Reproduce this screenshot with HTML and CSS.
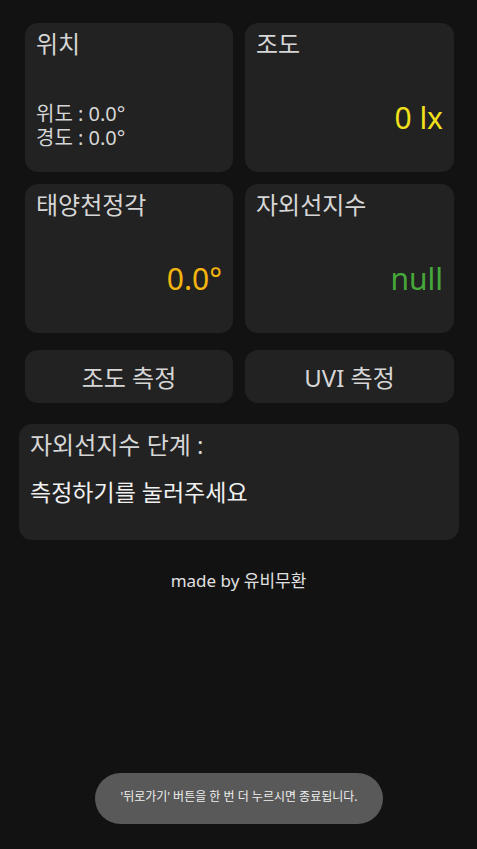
FILE: index.html
```html
<!DOCTYPE html>
<html lang="ko">
<head>
<meta charset="utf-8">
<link rel="stylesheet" href="styles.css">
</head>
<body>
<main class="screen">
  <section class="grid">
    <div class="card">
      <div class="title">위치</div>
      <p class="coords">위도 : 0.0°<br>경도 : 0.0°</p>
    </div>
    <div class="card">
      <div class="title">조도</div>
      <div class="value lux">0 lx</div>
    </div>
    <div class="card">
      <div class="title">태양천정각</div>
      <div class="value zenith">0.0°</div>
    </div>
    <div class="card">
      <div class="title">자외선지수</div>
      <div class="value uvi">null</div>
    </div>
    <button class="btn">조도 측정</button>
    <button class="btn">UVI 측정</button>
  </section>
  <section class="stage">
    <div class="stage-title">자외선지수 단계 :</div>
    <div class="stage-msg">측정하기를 눌러주세요</div>
  </section>
  <footer class="credit">made by 유비무환</footer>
</main>
<div class="toast">'뒤로가기' 버튼을 한 번 더 누르시면 종료됩니다.</div>
</body>
</html>
```

FILE: styles.css
```css
html, body {
  margin: 0;
  padding: 0;
  background: #121212;
}
body {
  width: 477px;
  height: 849px;
  overflow: hidden;
  font-family: "Noto Sans", "Noto Sans CJK KR", sans-serif;
  color: #dcdcdc;
}
.screen {
  display: flex;
  flex-direction: column;
}
.grid {
  display: grid;
  grid-template-columns: 208px 209px;
  grid-template-rows: 149px 149px 58px;
  column-gap: 12px;
  row-gap: 12px;
  padding: 23px 0 0 25px;
}
.grid .btn {
  margin-top: 5px;
}
.card {
  background: #222222;
  border-radius: 13px;
  padding: 5px 11px 0 11px;
  display: flex;
  flex-direction: column;
}
.title {
  font-size: 24px;
  line-height: 32px;
  color: #d6d6d6;
}
.coords {
  margin: 42px 0 0 0;
  font-size: 20px;
  line-height: 24px;
  color: #d6d6d6;
}
.value {
  margin-top: 38px;
  font-size: 30px;
  line-height: 40px;
  text-align: right;
}
.lux { color: #f2e01a; }
.zenith { color: #f5b50f; }
.uvi { color: #46a83a; }
.btn {
  border: none;
  background: #222222;
  border-radius: 13px;
  font-family: "Noto Sans", "Noto Sans CJK KR", sans-serif;
  font-size: 24px;
  color: #d6d6d6;
  padding: 0;
  height: 53px;
}
.stage {
  margin: 21px 18px 0 19px;
  height: 116px;
  background: #222222;
  border-radius: 13px;
  padding: 5px 11px 0 11px;
  box-sizing: border-box;
}
.stage-title {
  font-size: 24px;
  line-height: 32px;
  color: #d6d6d6;
}
.stage-msg {
  margin-top: 15px;
  font-size: 23px;
  line-height: 32px;
  color: #f0f0f0;
}
.credit {
  margin-top: 29px;
  text-align: center;
  font-size: 17px;
  line-height: 24px;
  color: #e0e0e0;
}
.toast {
  position: absolute;
  left: 95px;
  top: 773px;
  width: 288px;
  height: 51px;
  border-radius: 26px;
  background: #595959;
  color: #eeeeee;
  font-size: 12px;
  display: flex;
  align-items: center;
  justify-content: center;
  padding-bottom: 6px;
  box-sizing: border-box;
}
```
